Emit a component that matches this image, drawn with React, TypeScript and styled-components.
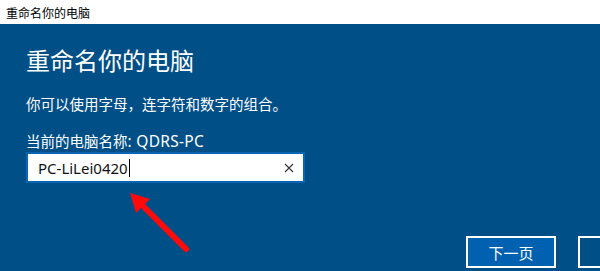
import React from "react";
import styled, { createGlobalStyle } from "styled-components";

const Global = createGlobalStyle`
  html, body { margin: 0; padding: 0; }
  body { width: 600px; height: 271px; overflow: hidden; font-family: "Noto Sans", "Noto Sans CJK SC", sans-serif; }
`;

const Page = styled.div`
  width: 600px;
  height: 271px;
  display: flex;
  flex-direction: column;
  overflow: hidden;
`;

const TitleBar = styled.div`
  height: 24px;
  flex: none;
  background: #ffffff;
  display: flex;
  align-items: center;
  padding-left: 6px;
  font-size: 12px;
  color: #000;
  font-family: "Noto Sans CJK SC", sans-serif;
`;

const Body = styled.div`
  flex: 1;
  background: #014f87;
  position: relative;
  padding: 21px 0 0 26px;
  color: #fff;
  font-family: "Noto Sans", "Noto Sans CJK SC", sans-serif;
`;

const Heading = styled.h1`
  margin: 0;
  font-size: 24px;
  line-height: 32px;
  font-weight: 400;
`;

const Text = styled.p<{ $top: number }>`
  margin: ${(p) => p.$top}px 0 0 0;
  font-size: 14.5px;
  line-height: 20px;
`;

const Latin = styled.span`
  font-size: 15.5px;
  letter-spacing: 0.3px;
`;

const InputBox = styled.div`
  margin-top: 1px;
  width: 265px;
  height: 27px;
  border: 2px solid #0a64b4;
  background: #fff;
  display: flex;
  align-items: center;
  padding-left: 10px;
  box-sizing: content-box;
`;

const InputText = styled.span`
  flex: 1;
  color: #111;
  font-family: "Noto Sans", sans-serif;
  font-size: 15px;
  display: flex;
  align-items: center;
`;

const Caret = styled.span`
  display: inline-block;
  width: 1px;
  height: 18px;
  background: #000;
  margin-left: 1px;
`;

const Clear = styled.span`
  width: 28px;
  display: flex;
  justify-content: center;
  align-items: center;
`;

const Buttons = styled.div`
  position: absolute;
  left: 466px;
  top: 212px;
  display: flex;
  gap: 22px;
`;

const Button = styled.div<{ $primary?: boolean }>`
  width: 86px;
  height: 28px;
  border: 2px solid #fff;
  background: ${(p) => (p.$primary ? "#0061b0" : "transparent")};
  color: #fff;
  font-size: 15px;
  font-family: "Noto Sans CJK SC", sans-serif;
  display: flex;
  align-items: center;
  justify-content: center;
`;

const Arrow = styled.svg`
  position: absolute;
  left: 0;
  top: 0;
  pointer-events: none;
`;

export default function App() {
  return (
    <Page>
      <Global />
      <TitleBar>重命名你的电脑</TitleBar>
      <Body>
        <Heading>重命名你的电脑</Heading>
        <Text $top={17}>你可以使用字母，连字符和数字的组合。</Text>
        <Text $top={17}>
          当前的电脑名称<Latin>: QDRS-PC</Latin>
        </Text>
        <InputBox>
          <InputText>
            PC-LiLei0420
            <Caret />
          </InputText>
          <Clear>
            <svg width="10" height="10" viewBox="0 0 10 10">
              <path d="M1 1 L9 9 M9 1 L1 9" stroke="#333" strokeWidth="1.1" fill="none" />
            </svg>
          </Clear>
        </InputBox>
        <Buttons>
          <Button $primary>下一页</Button>
          <Button />
        </Buttons>
        <Arrow width="600" height="247" viewBox="0 24 600 247">
          <line x1="186" y1="249" x2="138" y2="201" stroke="#ff0a0a" strokeWidth="6" strokeLinecap="round" />
          <polygon points="130,193 150,199 136,213" fill="#ff0a0a" />
        </Arrow>
      </Body>
    </Page>
  );
}
